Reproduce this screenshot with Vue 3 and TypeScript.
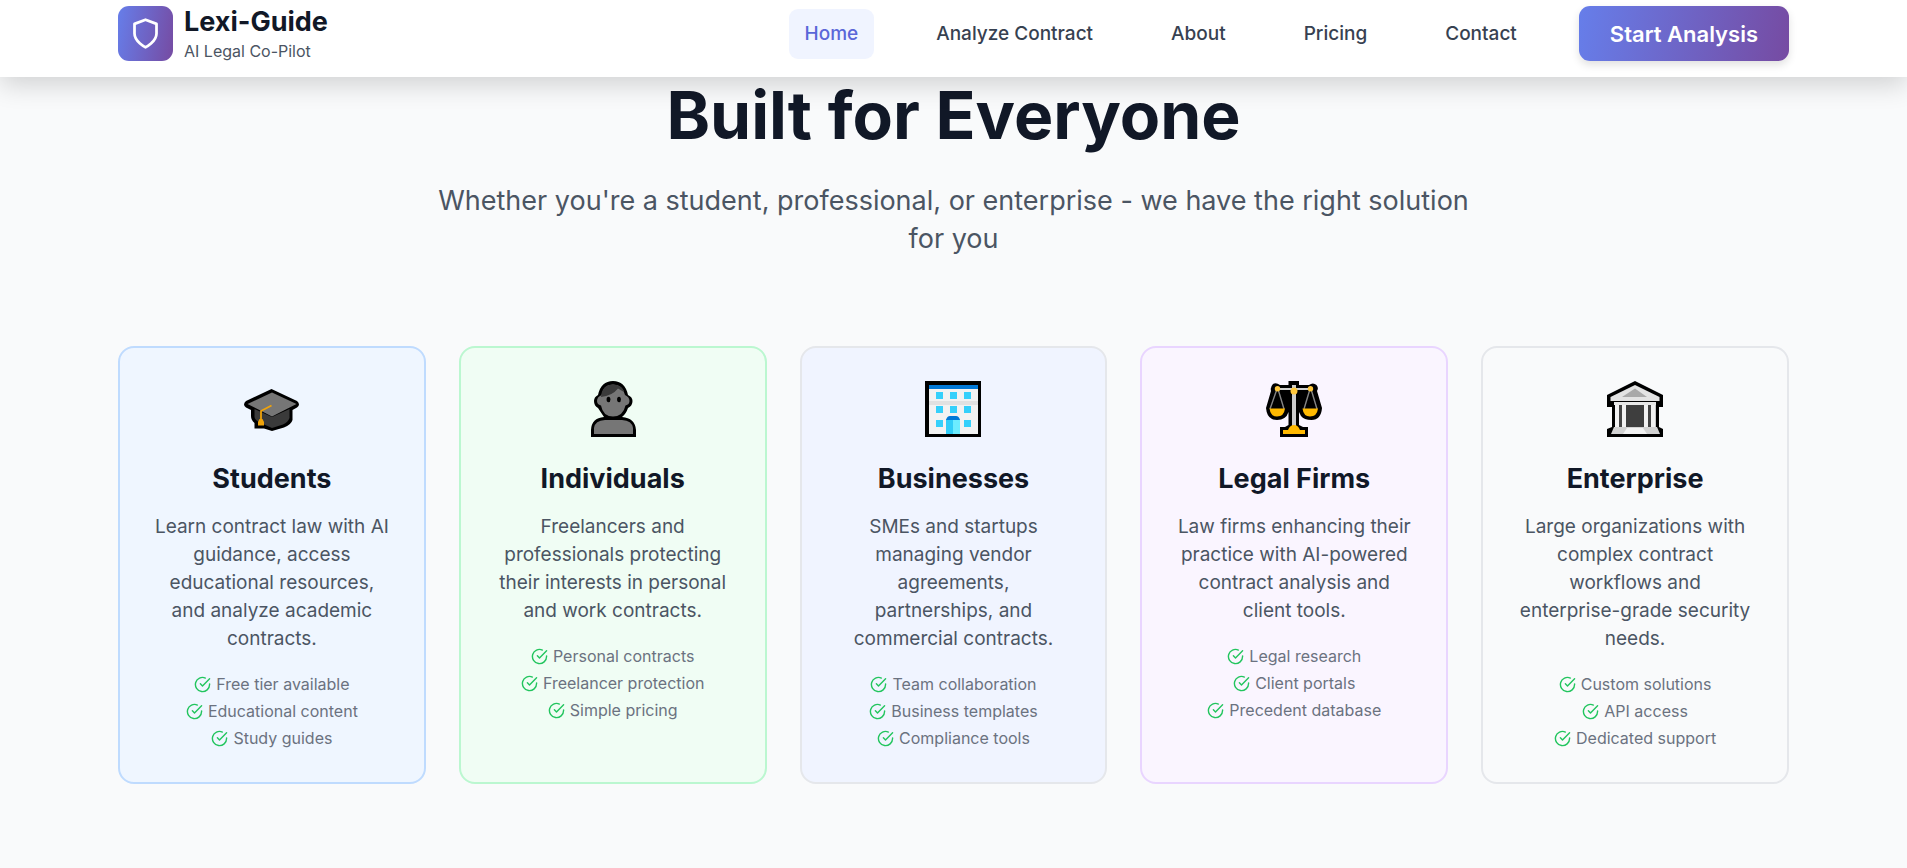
<script setup lang="ts">
interface NavItem {
  label: string
  href: string
  active?: boolean
}

interface Audience {
  id: string
  title: string
  text: string
  features: string[]
}

const navItems: NavItem[] = [
  { label: 'Home', href: '#home', active: true },
  { label: 'Analyze Contract', href: '#analyze' },
  { label: 'About', href: '#about' },
  { label: 'Pricing', href: '#pricing' },
  { label: 'Contact', href: '#contact' },
]

const audiences: Audience[] = [
  {
    id: 'students',
    title: 'Students',
    text: 'Learn contract law with AI guidance, access educational resources, and analyze academic contracts.',
    features: ['Free tier available', 'Educational content', 'Study guides'],
  },
  {
    id: 'individuals',
    title: 'Individuals',
    text: 'Freelancers and professionals protecting their interests in personal and work contracts.',
    features: ['Personal contracts', 'Freelancer protection', 'Simple pricing'],
  },
  {
    id: 'businesses',
    title: 'Businesses',
    text: 'SMEs and startups managing vendor agreements, partnerships, and commercial contracts.',
    features: ['Team collaboration', 'Business templates', 'Compliance tools'],
  },
  {
    id: 'legal',
    title: 'Legal Firms',
    text: 'Law firms enhancing their practice with AI-powered contract analysis and client tools.',
    features: ['Legal research', 'Client portals', 'Precedent database'],
  },
  {
    id: 'enterprise',
    title: 'Enterprise',
    text: 'Large organizations with complex contract workflows and enterprise-grade security needs.',
    features: ['Custom solutions', 'API access', 'Dedicated support'],
  },
]
</script>

<template>
  <div class="page">
    <header class="header">
      <div class="container bar">
        <a class="brand" href="#home">
          <span class="logo">
            <svg viewBox="0 0 24 24" aria-hidden="true">
              <path d="M12 22s8-4 8-10V5l-8-3-8 3v7c0 6 8 10 8 10z" />
            </svg>
          </span>
          <span class="brand-text">
            <span class="brand-name">Lexi-Guide</span>
            <span class="brand-sub">AI Legal Co-Pilot</span>
          </span>
        </a>
        <nav class="nav">
          <a
            v-for="item in navItems"
            :key="item.label"
            :href="item.href"
            class="nav-link"
            :class="{ active: item.active }"
          >{{ item.label }}</a>
          <button type="button" class="cta">Start Analysis</button>
        </nav>
      </div>
    </header>

    <main class="section">
      <div class="container">
        <h2 class="heading">Built for Everyone</h2>
        <p class="lead">
          Whether you're a student, professional, or enterprise - we have the right solution for you
        </p>
        <div class="cards">
          <article v-for="a in audiences" :key="a.id" class="card" :class="a.id">
            <svg class="emoji" viewBox="0 0 56 56" aria-hidden="true">
              <g v-if="a.id === 'students'">
                <path d="M27.5 8 L53 20 Q57 23.5 53 26.500 L48.500 29 V39 Q47 44 40 46.500 L28 50 L20 47.500 H10.500 V42 Q7 39 7 35 V29 L2 26.500 Q-2 23.500 2 20 Z" fill="#000" />
                <path d="M10.500 28 L28 36 L45.500 28 V37 Q44 41 39 43.500 L28 47 L19 43 Q11 40 10.500 36 Z" fill="#3a3a3a" />
                <path d="M28 11.500 L52.500 23 L28 35.500 L3.500 23 Z" fill="#767676" />
                <path d="M27.500 24.500 L17 30 V40" fill="none" stroke="#f0a30a" stroke-width="1.800" />
                <path d="M15.500 38 H18.500 L20 41 V44.500 H14 V41 Z" fill="#f0a30a" />
              </g>
              <g v-else-if="a.id === 'individuals'">
                <path d="M6 56 V49 Q6.500 37 19 36 L13 27 Q9 25 9 20 Q9 16 13 14 Q16 0 28 0 Q40 0 43 14 Q47.500 16 47.500 20 Q47.500 25 43 27 Q41 33 37 36 Q50 37 51 49 V56 Z" fill="#000" />
                <path d="M9 53 V47 Q10 39.500 20 39 H37 Q47 39.500 48 47 V53 Z" fill="#767676" />
                <path d="M16.500 14 Q18 3.500 28 3.500 Q38 3.500 40 14 Q44.500 16 44.500 20 Q44.500 23.500 40.500 24.500 Q38 35.500 28 35.500 Q18 35.500 16 24.500 Q12 23.500 12 20 Q12 16 16.500 14 Z" fill="#767676" />
                <path d="M16 16 Q17 3.500 28 3.500 Q37 3.500 39 11 L33 7.500 Q27 15 16 16 Z" fill="#3a3a3a" />
                <ellipse cx="23.500" cy="18.500" rx="1.900" ry="2.800" fill="#000" />
                <ellipse cx="34" cy="18.500" rx="1.900" ry="2.800" fill="#000" />
              </g>
              <g v-else-if="a.id === 'businesses'">
                <rect width="56" height="56" fill="#000" />
                <rect x="4" y="4" width="49" height="49" fill="#f2f2f2" />
                <rect x="4" y="4" width="49" height="4" fill="#0078d7" />
                <rect x="4" y="20" width="49" height="4" fill="#e1e1e1" />
                <path d="M11 11h7v7h-7zM25 11h7v7h-7zM39 11h7v7h-7zM11 25h7v7h-7zM25 25h7v7h-7zM39 25h7v7h-7zM11 39h7v7h-7zM39 39h7v7h-7z" fill="#35d0fb" />
                <rect x="21" y="38" width="7" height="15" fill="#30cdf8" />
                <rect x="28" y="38" width="7" height="15" fill="#6cecff" />
                <path d="M21 39 Q22 35 25 35 H31 Q34 35 35 39 Z" fill="#0078d7" />
              </g>
              <g v-else-if="a.id === 'legal'">
                <path d="M22.500 0 H33 V4 H43 Q47 1 50.500 4 Q53 7 51 10 L56 27 Q55 39 45.500 39 Q38 39 35 35 L33 31 V44 L37 46 H42 V56 H14 V46 H19 L22.500 44 V31 Q20 39 11 39 Q1 39 0 27 L5 10 Q4 6 7 3 Q10 1 14 4 H22.500 Z" fill="#000" />
                <path d="M11 8 L4 28 M12 8 L18 28 M44 8 L38 28 M45 8 L51 28" stroke="#858585" stroke-width="1.400" fill="none" />
                <path d="M11 8 H45" stroke="#d0d0d0" stroke-width="2" />
                <rect x="26" y="4" width="4" height="42" fill="#cccccc" />
                <path d="M3.500 27.500 H19 Q18 35.500 11 35.500 Q4.500 35.500 3.500 27.500 Z M36.500 27.500 H52 Q51 35.500 44 35.500 Q37.500 35.500 36.500 27.500 Z" fill="#ffb900" />
                <path d="M17 53 V49 H22 Q24 44 28 44 Q32 44 34 49 H39 V53 Z" fill="#ffb900" />
                <circle cx="11.500" cy="7.800" r="2.700" fill="#ffc83d" />
                <circle cx="44.500" cy="7.800" r="2.700" fill="#ffc83d" />
                <circle cx="28" cy="10" r="3.500" fill="#ffc83d" />
              </g>
              <g v-else>
                <path d="M28 0 L56 14 V26 H52 V46 L56 48 V56 H0 V48 L5 46 V26 H0 V14 Z" fill="#000" />
                <path d="M28 4 L52.500 16 V20 H3.500 V16 Z" fill="#e3e3e3" />
                <path d="M28 7.500 L40 16 H15 Z" fill="#a9a9a9" />
                <rect x="8" y="21" width="41" height="26" fill="#c8c8c8" />
                <rect x="19" y="23" width="18" height="24" fill="#3e3e3e" />
                <path d="M11 24h6v22h-6zM39 24h6v22h-6z" fill="#444" />
                <path d="M8 23h4v23h-4zM15 23h4v23h-4zM37 23h4v23h-4zM44 23h4v23h-4z" fill="#f2f2f2" />
                <path d="M7 21h42v3h-42z" fill="#e8e8e8" />
                <path d="M7 46 H50 L53 53 H4 Z" fill="#d2d2d2" />
                <path d="M20 47 H36 L40 53 H16 Z" fill="#f2f2f2" />
              </g>
            </svg>
            <h3 class="card-title">{{ a.title }}</h3>
            <p class="card-text">{{ a.text }}</p>
            <ul class="features">
              <li v-for="f in a.features" :key="f">
                <svg class="check" viewBox="0 0 24 24" aria-hidden="true">
                  <path d="M22 11.080V12a10 10 0 1 1-5.930-9.140" />
                  <path d="M22 4 12 14.010l-3-3" />
                </svg>
                <span>{{ f }}</span>
              </li>
            </ul>
          </article>
        </div>
      </div>
    </main>
  </div>
</template>

<style>
body {
  margin: 0;
  background: #f9fafb;
}
</style>

<style scoped>
.page {
  min-height: 100vh;
  box-sizing: border-box;
  background: #f9fafb;
  color: #111827;
  font-family: Inter, "Liberation Sans", sans-serif;
}

.container {
  max-width: 1671px;
  margin: 0 auto;
}

.header {
  position: sticky;
  top: 0;
  z-index: 1;
  padding: 5px 24px 15px;
  background: #fff;
  box-shadow: 0 8px 26px rgba(0, 0, 0, 0.16);
}

.bar {
  display: flex;
  align-items: center;
  justify-content: space-between;
}

.brand {
  display: flex;
  align-items: center;
  gap: 11px;
  color: inherit;
  text-decoration: none;
}

.logo {
  display: grid;
  place-items: center;
  width: 55px;
  height: 55px;
  border-radius: 11px;
  background: linear-gradient(100deg, #667eea, #764ba2);
}

.logo svg {
  width: 33px;
  height: 33px;
  fill: none;
  stroke: #fff;
  stroke-width: 2;
  stroke-linecap: round;
  stroke-linejoin: round;
}

.brand-text {
  display: flex;
  flex-direction: column;
  gap: 2px;
}

.brand-name {
  font-size: 27px;
  line-height: 34px;
  font-weight: 700;
}

.brand-sub {
  font-size: 16px;
  line-height: 21px;
  color: #4b5563;
}

.nav {
  display: flex;
  align-items: center;
  gap: 46px;
}

.nav-link {
  padding: 11px 16px;
  border-radius: 9px;
  color: #374151;
  font-size: 19px;
  line-height: 28px;
  font-weight: 500;
  text-decoration: none;
}

.nav-link.active {
  background: #f0f4ff;
  color: #5a67d8;
}

.cta {
  padding: 0 31px;
  height: 55px;
  border: 0;
  border-radius: 11px;
  background: linear-gradient(100deg, #667eea, #764ba2);
  box-shadow: 0 4px 8px rgba(0, 0, 0, 0.12);
  color: #fff;
  font-family: inherit;
  font-size: 22px;
  font-weight: 600;
}

.section {
  padding: 0 24px 84px;
}

.heading {
  margin: 0;
  font-size: 66px;
  line-height: 76px;
  font-weight: 700;
  text-align: center;
}

.lead {
  max-width: 1056px;
  margin: 29px auto 88px;
  color: #4b5563;
  font-size: 27px;
  line-height: 38px;
  text-align: center;
}

.cards {
  display: grid;
  grid-template-columns: repeat(5, 1fr);
  gap: 33px;
}

.card {
  display: flex;
  flex-direction: column;
  align-items: center;
  padding: 33px 32px 30px;
  border: 2px solid #e5e7eb;
  border-radius: 16px;
  text-align: center;
}

.students { background: #eff6ff; border-color: #bfdbfe; }
.individuals { background: #f0fdf4; border-color: #bbf7d0; }
.businesses { background: #f0f4ff; }
.legal { background: #faf5ff; border-color: #e9d5ff; }
.enterprise { background: #f9fafb; }

.emoji {
  width: 56px;
  height: 56px;
}

.card-title {
  margin: 23px 0 15px;
  font-size: 27px;
  line-height: 38px;
  font-weight: 700;
}

.card-text {
  max-width: 235px;
  margin: 0 0 18px;
  color: #4b5563;
  font-size: 19px;
  line-height: 28px;
}

.features {
  margin: 0;
  padding: 0;
  list-style: none;
  color: #6b7280;
  font-size: 16px;
  line-height: 27px;
}

.features li {
  display: flex;
  align-items: center;
  justify-content: center;
  gap: 5px;
}

.check {
  width: 17px;
  height: 17px;
  fill: none;
  stroke: #22c55e;
  stroke-width: 2;
  stroke-linecap: round;
  stroke-linejoin: round;
}
</style>
